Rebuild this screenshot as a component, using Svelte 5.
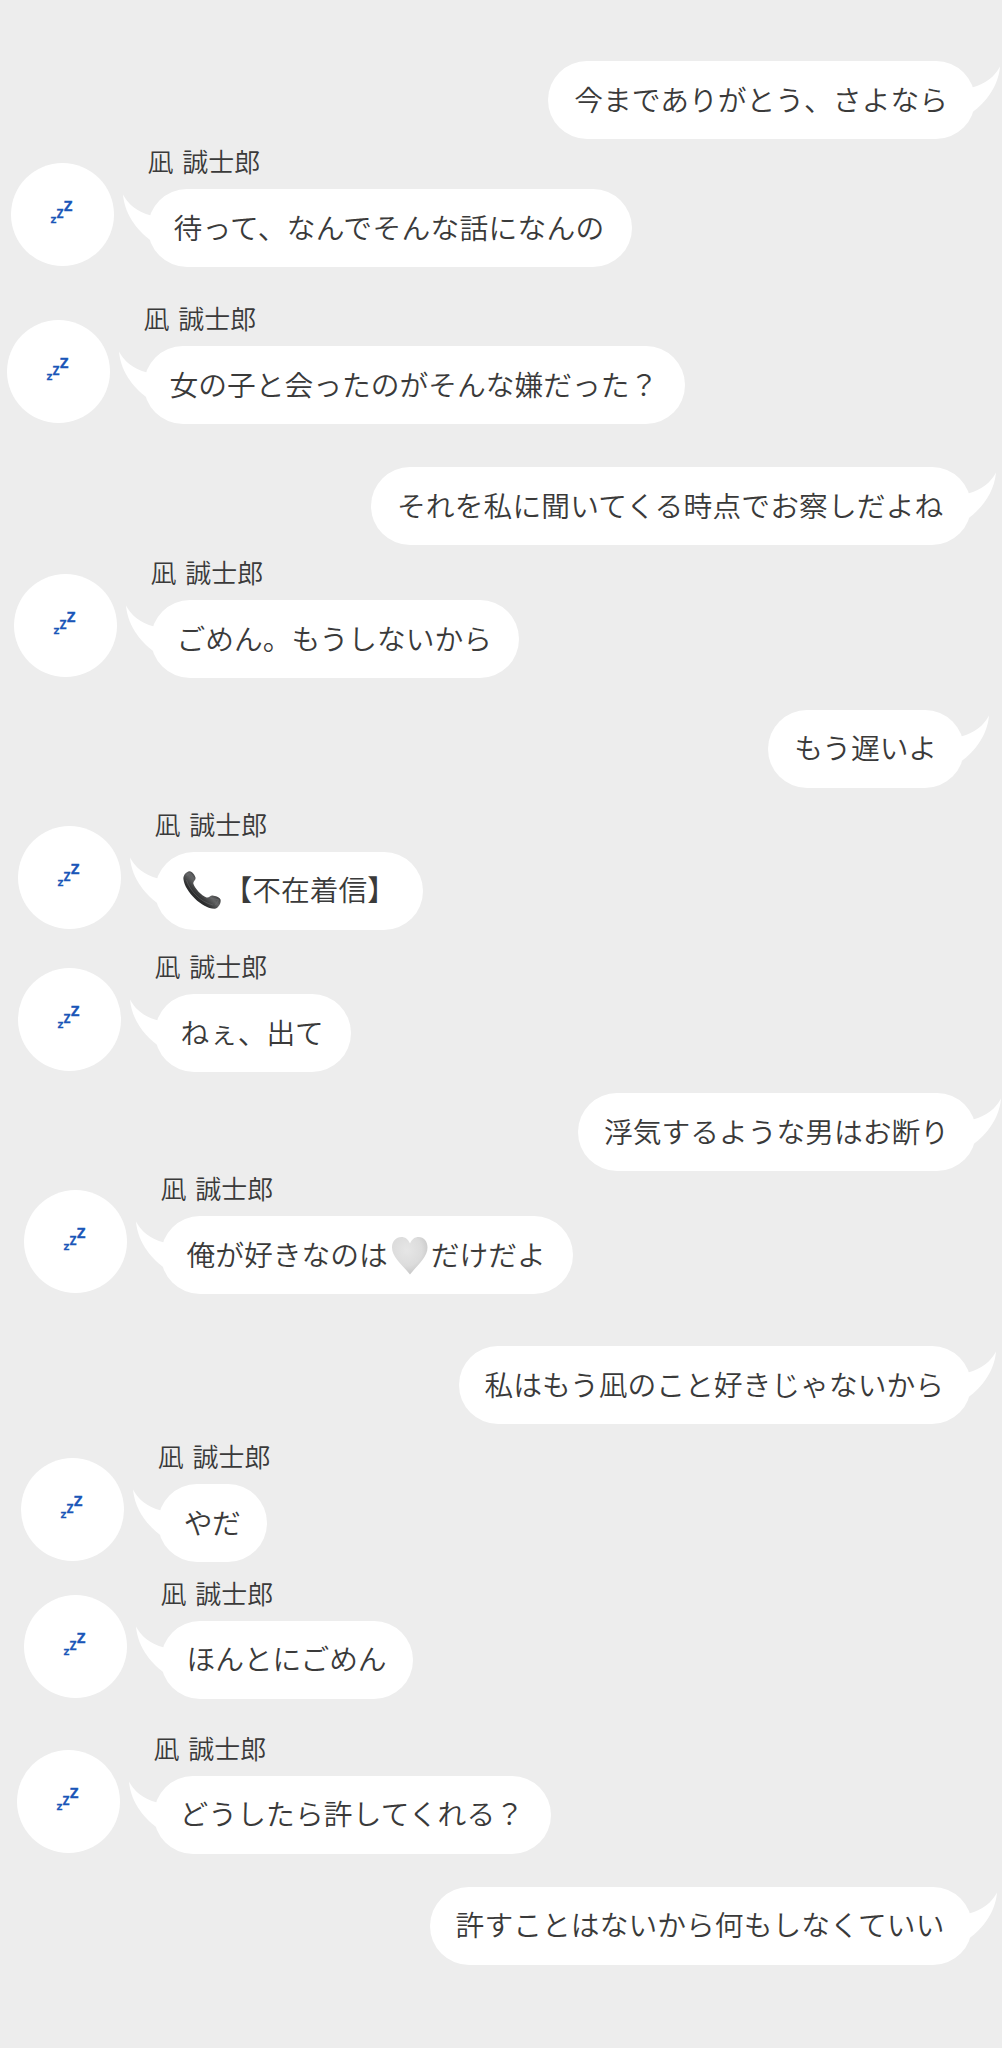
<script>
  const sender = '凪 誠士郎';

  // gap: space above the row; inset: distance from the row's own edge of the screen;
  // track: letter spacing of the message text
  const messages = [
    { mine: true, gap: 61, inset: 27, track: 0.03, parts: ['今までありがとう、さよなら'] },
    { mine: false, gap: 4, inset: 11, track: 0.28, parts: ['待って、なんでそんな話になんの'] },
    { mine: false, gap: 33, inset: 7, track: 0, parts: ['女の子と会ったのがそんな嫌だった？'] },
    { mine: true, gap: 43, inset: 31.5, track: 0.14, parts: ['それを私に聞いてくる時点でお察しだよね'] },
    { mine: false, gap: 9, inset: 14, track: 0, parts: ['ごめん。もうしないから'] },
    { mine: true, gap: 31.5, inset: 38, track: 0.1, parts: ['もう遅いよ'] },
    { mine: false, gap: 18, inset: 18, track: 0, parts: ['phone', '【不在着信】'] },
    { mine: false, gap: 18.5, inset: 18, track: -0.1, parts: ['ねぇ、出て'] },
    { mine: true, gap: 21, inset: 26, track: 0, parts: ['浮気するような男はお断り'] },
    { mine: false, gap: -1, inset: 24, track: 0, parts: ['俺が好きなのは', 'heart', 'だけだよ'] },
    { mine: true, gap: 52, inset: 31, track: 0.02, parts: ['私はもう凪のこと好きじゃないから'] },
    { mine: false, gap: 14, inset: 21.3, track: -0.5, parts: ['やだ'] },
    { mine: false, gap: 12.5, inset: 24, track: -0.1, parts: ['ほんとにごめん'] },
    { mine: false, gap: 31, inset: 17, track: 0.12, parts: ['どうしたら許してくれる？'] },
    { mine: true, gap: 33, inset: 30.5, track: 0.06, parts: ['許すことはないから何もしなくていい'] },
  ];
</script>

{#snippet bubble(m)}
  <div class="bubble">
    <svg class="tail" viewBox="0 0 40 60" aria-hidden="true">
      <path d="M1 1.5C6 11 15 19 29 22.5L36 34L31 49C18 40 3 24 1 1.5Z" />
    </svg>
    {#each m.parts as part}
      {#if part === 'phone'}
        <svg class="emoji" viewBox="0 0 43 43" aria-hidden="true">
          <defs>
            <linearGradient id="handset" x1="0" y1="1" x2="1" y2="0">
              <stop offset="0.35" stop-color="#2b2c2d" />
              <stop offset="0.52" stop-color="#636465" />
              <stop offset="0.65" stop-color="#3a3b3c" />
            </linearGradient>
          </defs>
          <path
            d="M2.500 10.500C1.800 6.500 5 2.800 8.500 2.200C11 2 14.300 6.500 14.600 9C14.800 11 12 12.300 12.300 14.500C13.800 19.500 20.500 26.500 25.500 28.500C28 29.200 29.500 26.300 31.500 26.600C34.500 27 38.500 28.200 39.500 30.500C40.500 33.500 37.500 39.500 33.500 39.800C21 39.500 4 22.500 2.500 10.500Z"
            fill="url(#handset)"
          />
          <path d="M5.500 11C8.500 21 19 33 32 36" fill="none" stroke="#737476" stroke-width="1" opacity=".45" />
          <path d="M5.500 6.500L9 4L12.800 9.500M29.500 29L37.500 31L34.500 36" fill="none" stroke="#6c6d6f" stroke-width="1.200" opacity=".6" />
        </svg>
      {:else if part === 'heart'}
        <svg class="emoji" viewBox="0 0 43 43" aria-hidden="true">
          <defs>
            <radialGradient id="pearl" cx=".42" cy=".35" r=".7">
              <stop offset="0" stop-color="#e6e6e6" />
              <stop offset="0.6" stop-color="#dcdcdc" />
              <stop offset="1" stop-color="#c4c4c4" />
            </radialGradient>
          </defs>
          <path
            d="M22 9.500C20 5 17 3 13.500 3C8 3 4 7.500 4 13.500C4 23 14 30.500 22 40.500C30 30.500 39.500 23 39.500 13.500C39.500 7.500 36 3 30.500 3C27 3 24 5 22 9.500Z"
            fill="url(#pearl)"
          />
        </svg>
      {:else}
        <span>{part}</span>
      {/if}
    {/each}
  </div>
{/snippet}

<main>
  {#each messages as m}
    <section class="row" class:mine={m.mine} style="--gap:{m.gap}px; --inset:{m.inset}px; --track:{m.track}px">
      {#if !m.mine}
        <div class="avatar">
          <svg viewBox="0 0 103 103" aria-hidden="true">
            <text x="39.800" y="60" font-size="9.500">Z</text>
            <text x="45.800" y="54.500" font-size="11.500">Z</text>
            <text x="53" y="48.300" font-size="14.500">Z</text>
          </svg>
        </div>
        <div class="body">
          <div class="name">{sender}</div>
          {@render bubble(m)}
        </div>
      {:else}
        {@render bubble(m)}
      {/if}
    </section>
  {/each}
</main>

<style>
  :global(body) {
    background: #ededed;
  }

  main {
    display: flex;
    flex-direction: column;
    box-sizing: border-box;
    width: 1002px;
    height: 2048px;
    overflow: hidden;
    background: #ededed;
    color: #3a3a3a;
    font-family: 'Noto Sans CJK JP', sans-serif;
    font-weight: 350;
  }

  .row {
    display: flex;
    align-items: flex-start;
    flex: none;
    margin-top: var(--gap);
    padding-left: var(--inset);
  }

  .row.mine {
    justify-content: flex-end;
    padding-left: 0;
    padding-right: var(--inset);
  }

  .row:first-child {
    margin-top: 0;
    padding-top: var(--gap);
  }

  .avatar {
    flex: none;
    width: 103px;
    height: 103px;
    margin-top: 20px;
    border-radius: 50%;
    background: #fff;
  }

  .avatar svg {
    display: block;
    width: 103px;
    height: 103px;
  }

  .avatar text {
    fill: #1a56b8;
    stroke: #1a56b8;
    stroke-width: 0.3px;
    font-family: 'Open Sans', sans-serif;
    font-weight: 700;
  }

  .body {
    display: flex;
    flex-direction: column;
    align-items: flex-start;
    margin-left: 33.5px;
  }

  .name {
    height: 40px;
    margin-bottom: 6px;
    font-size: 26px;
    line-height: 36px;
    word-spacing: 3px;
    white-space: nowrap;
  }

  .bubble {
    position: relative;
    display: flex;
    align-items: center;
    box-sizing: border-box;
    height: 78px;
    padding: 0 27px 0 26px;
    border-radius: 39px;
    background: #fff;
    font-size: 28.75px;
    letter-spacing: var(--track);
    line-height: 40px;
    white-space: nowrap;
  }

  .tail {
    position: absolute;
    top: 4px;
    left: -26px;
    width: 40px;
    height: 60px;
    fill: #fff;
  }

  .mine .tail {
    left: auto;
    right: -26px;
    transform: scaleX(-1);
  }

  .bubble span {
    padding-bottom: 3px;
  }

  .emoji {
    flex: none;
    width: 43px;
    height: 43px;
  }
</style>
